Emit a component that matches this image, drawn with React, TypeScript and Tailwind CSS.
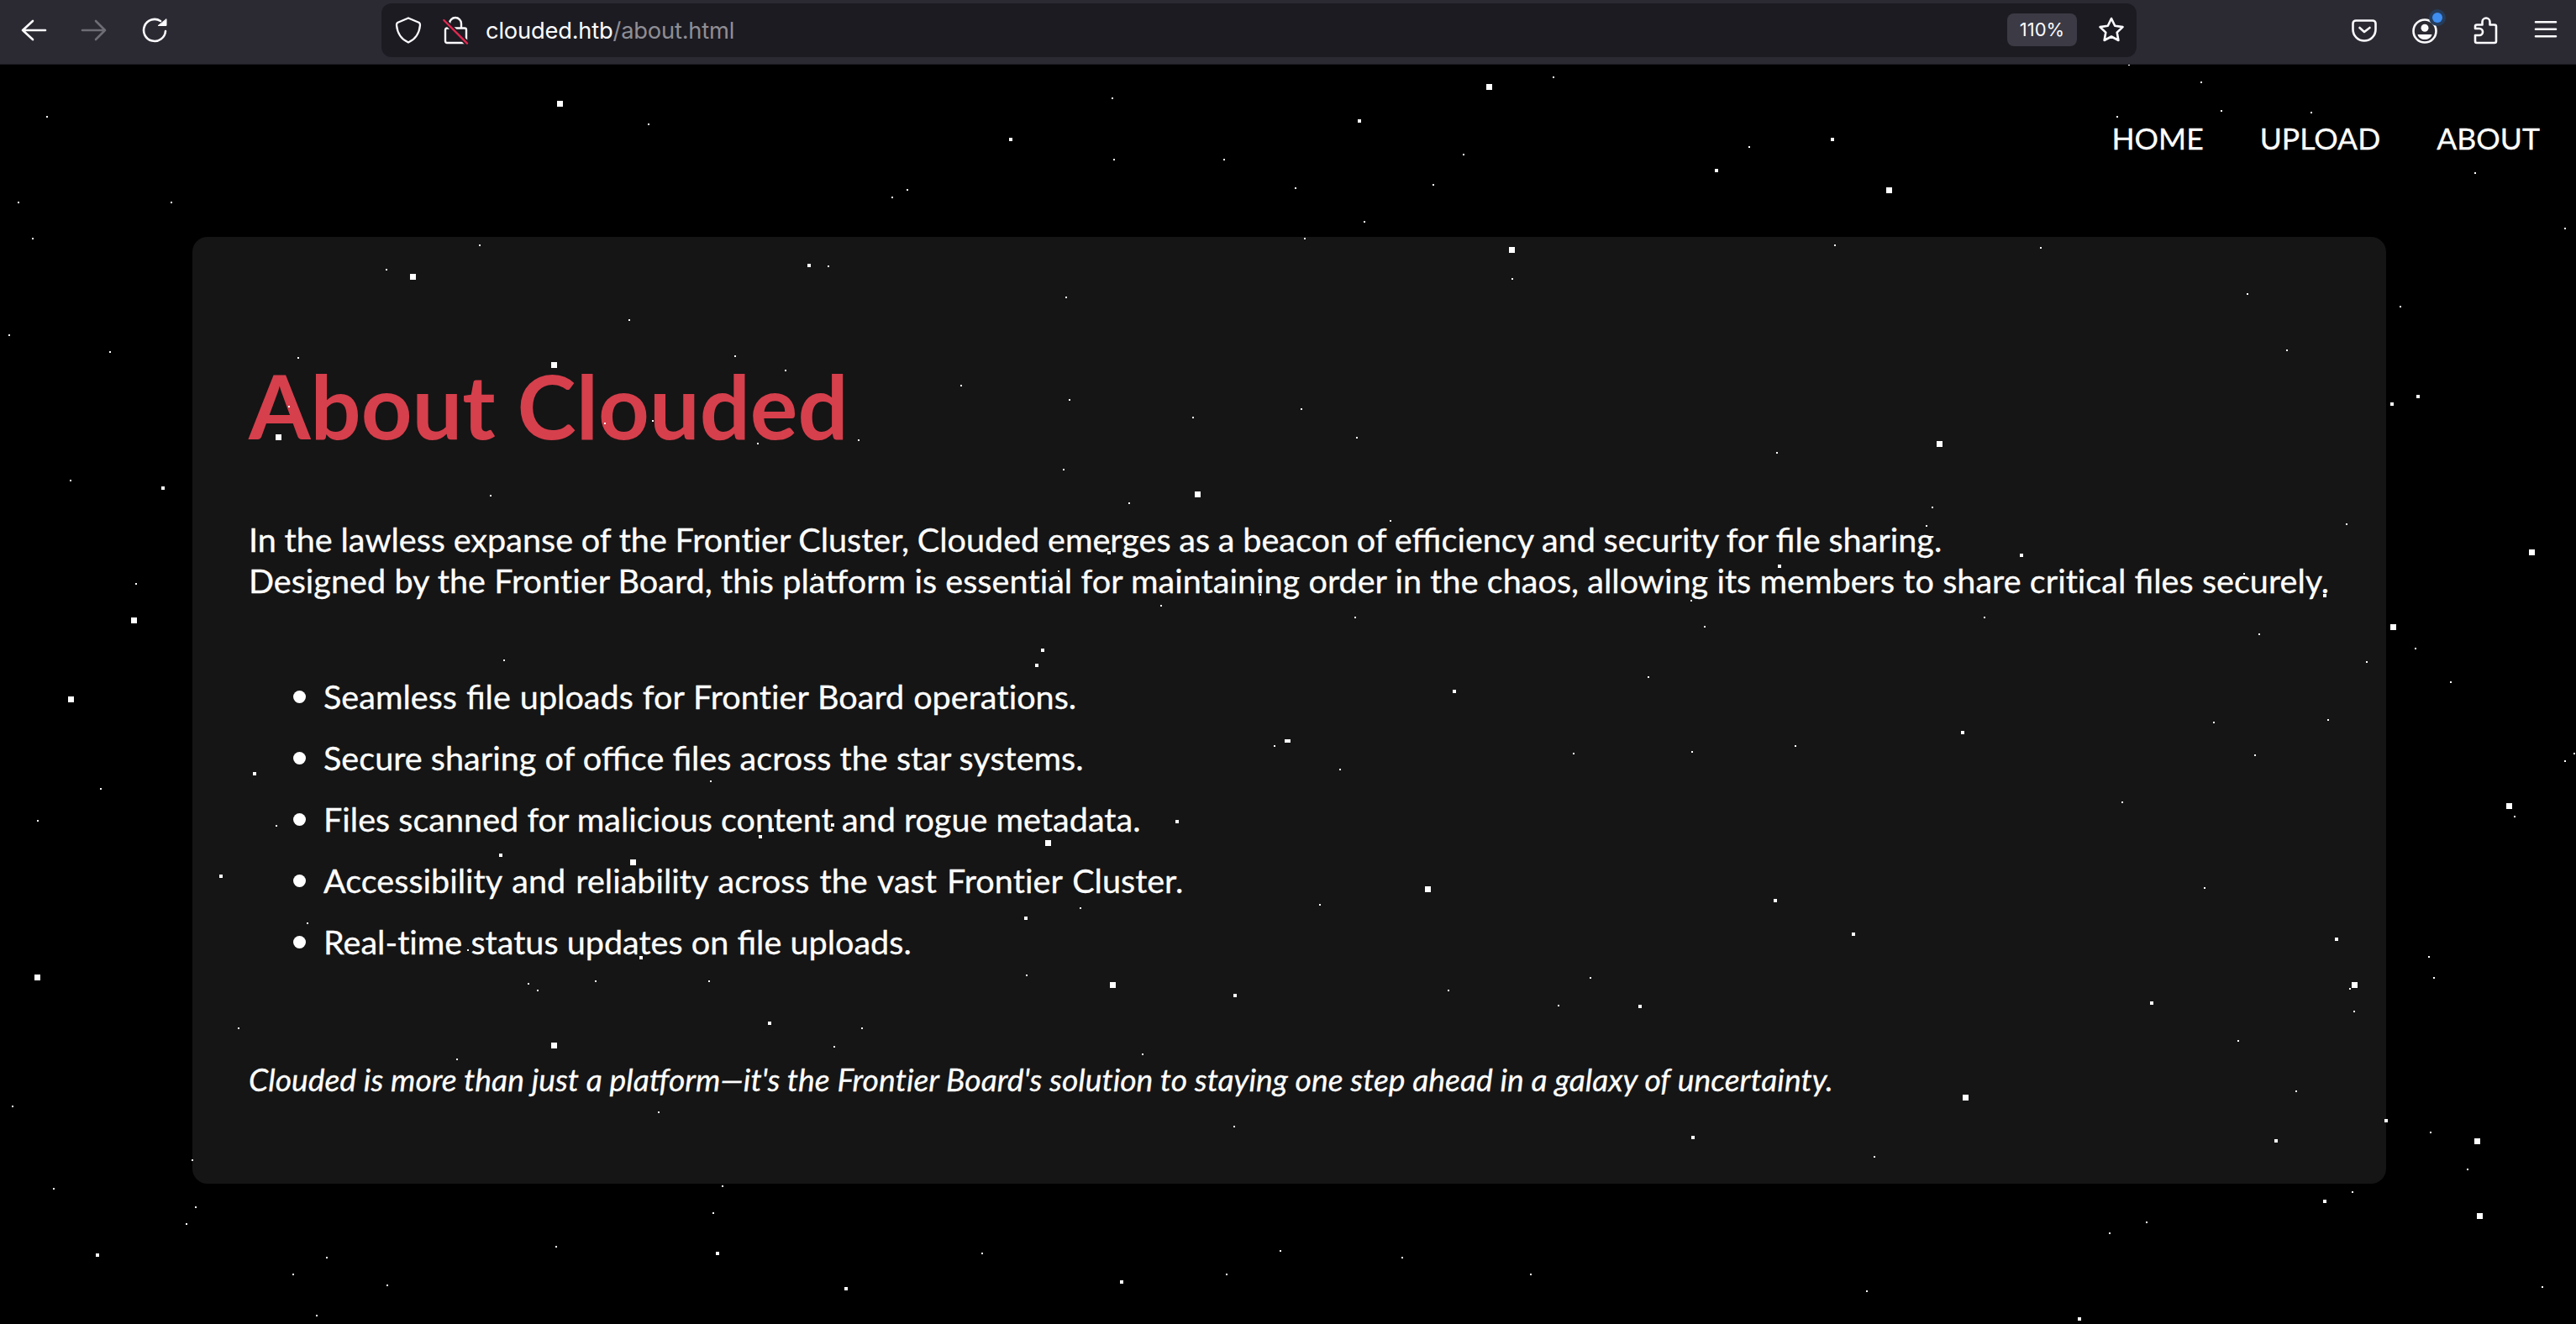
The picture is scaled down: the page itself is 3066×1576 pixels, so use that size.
import React from "react";

type Star = [number, number, number?];

// star positions read off four crops of the page; each crop has its own origin and scale
const tile = (ox: number, oy: number, pts: Star[]) =>
  pts.map(([x, y, s]) => [Math.round(ox + x / 1.0228), Math.round(oy + y / 2.09), s ?? 2] as const);

const stars = [
  ...tile(0, 76, [
    [681, 99, 7], [502, 528, 7], [674, 749, 7], [339, 927, 7], [1457, 1071, 7], [163, 1383, 7],
    [1230, 189, 4], [985, 502, 4], [198, 1056, 4], [1269, 1459, 4], [1262, 1496, 4], [1350, 1217, 4],
    [57, 131], [790, 150], [1354, 86], [1356, 238], [1490, 238], [1105, 313], [1086, 332], [22, 345], [209, 345],
    [40, 435], [584, 451], [1008, 503], [470, 512], [1298, 582], [766, 637], [11, 675], [134, 717], [363, 732],
    [895, 727], [956, 763], [1170, 800], [1302, 837], [1452, 880], [352, 853], [736, 895], [795, 888], [923, 944],
    [1045, 937], [1295, 1010], [86, 1037], [597, 1075], [1375, 1093], [1289, 1263], [166, 1294], [1414, 1348],
    [614, 1484], [1534, 1320], [992, 1270],
  ]),
  ...tile(1533, 76, [
    [244, 57, 7], [731, 314, 7], [272, 462, 7], [793, 945, 7], [1514, 1215, 7], [1345, 1401, 7],
    [87, 143, 4], [663, 189, 4], [522, 265, 4], [1376, 828, 4], [1344, 847, 4], [893, 1222, 4], [598, 1250, 4],
    [1262, 1322, 4], [203, 1561, 4],
    [323, 33], [1024, 3], [1112, 47], [1136, 116], [1246, 122], [1010, 131], [562, 206], [214, 225], [9, 309],
    [177, 302], [93, 393], [1445, 271], [20, 435], [666, 451], [916, 458], [1555, 409], [273, 535], [1168, 573],
    [1354, 605], [1216, 713], [16, 860], [84, 930], [595, 968], [784, 1103], [777, 1150], [125, 1138], [1289, 1145],
    [82, 1378], [507, 1401], [848, 1378], [1182, 1419], [1373, 1455], [1313, 1488], [439, 1526], [1416, 1539],
    [491, 1335], [1164, 1268],
  ]),
  ...tile(0, 826, [
    [86, 13, 7], [45, 705, 7], [1275, 370, 7], [770, 418, 7], [1354, 724, 7], [674, 873, 7],
    [310, 198, 4], [610, 401, 4], [269, 453, 4], [940, 338, 4], [926, 355, 4], [1014, 325, 4], [1249, 559, 4],
    [780, 657, 4], [1504, 750, 4], [937, 819, 4], [119, 1396, 4], [873, 1392, 4], [1030, 1480, 4], [1566, 116, 4],
    [1433, 318, 4], [1365, 1463, 4],
    [1552, 129], [865, 217], [123, 236], [46, 316], [336, 329], [1315, 533], [374, 570], [570, 637], [643, 722],
    [655, 738], [725, 715], [863, 715], [1250, 700], [290, 831], [1049, 831], [1016, 877], [556, 909], [1391, 897],
    [15, 1026], [802, 1041], [1503, 1077], [234, 1160], [65, 1231], [880, 1225], [238, 1277], [868, 1292], [227, 1319],
    [677, 1376], [398, 1403], [1196, 1392], [1559, 1385], [357, 1445], [471, 1472], [1493, 1445], [386, 1547],
  ]),
  ...tile(1533, 826, [
    [170, 484, 7], [824, 1004, 7], [1298, 724, 7], [1486, 279, 7], [1447, 1111, 7], [1450, 1297, 7],
    [1, 116, 4], [821, 96, 4], [593, 514, 4], [688, 598, 4], [1276, 610, 4], [429, 777, 4], [1051, 769, 4],
    [1337, 1062, 4], [493, 1104, 4], [1203, 1112, 4], [1262, 1263, 4], [963, 1555, 4],
    [63, 189], [348, 148], [492, 144], [618, 130], [1127, 72], [1266, 64], [1177, 153], [1016, 270], [1555, 167],
    [1566, 148], [1493, 305], [1116, 483], [39, 524], [368, 707], [195, 738], [329, 776], [1293, 733], [1298, 790],
    [1389, 654], [1395, 707], [1157, 863], [1227, 989], [1391, 1090], [714, 1152], [1436, 1183], [1296, 1240],
    [1045, 1315], [1000, 1342], [139, 1403], [296, 1445], [705, 1486], [1527, 1475],
  ]),
];

function Starfield() {
  return (
    <div className="absolute inset-0 overflow-hidden pointer-events-none">
      {stars.map(([x, y, s], i) => (
        <div
          key={i}
          className="absolute bg-white"
          style={{ left: x - Math.floor(s / 2), top: y - Math.floor(s / 2), width: s, height: s }}
        />
      ))}
    </div>
  );
}

function ToolIcon({ children, className = "text-[#fbfbfe]" }: { children: React.ReactNode; className?: string }) {
  return (
    <svg
      viewBox="0 0 32 32"
      width="32"
      height="32"
      fill="none"
      stroke="currentColor"
      strokeWidth="2.6"
      strokeLinecap="round"
      strokeLinejoin="round"
      className={`shrink-0 overflow-visible ${className}`}
    >
      {children}
    </svg>
  );
}

function Toolbar() {
  return (
    <div className="h-[77px] pb-[5px] bg-[#2b2a33] border-b border-[#1c1b22] flex items-center relative z-10 font-['Inter',sans-serif] text-[#fbfbfe]">
      <div className="w-[454px] shrink-0 flex items-center pl-[24px] gap-[40px]">
        <ToolIcon>
          <path d="M30 16H3M15 5 3 16l12 11" />
        </ToolIcon>
        <ToolIcon className="text-[#6e6d75]">
          <path d="M2 16h27M18 5l11 11-11 11" />
        </ToolIcon>
        <ToolIcon>
          <path d="M23 5A13 13 0 1 0 29 17" />
          <path d="M20.500 10.500H30V3Z" fill="currentColor" stroke="currentColor" strokeWidth="1" />
        </ToolIcon>
      </div>
      <div className="w-[2089px] shrink-0 h-[64px] bg-[#1c1b22] rounded-[12px] flex items-center pl-[16px] pr-[14px]">
        <ToolIcon>
          <path d="M16 1.500 29 7q1 1 1 3C29 20 24 27 16 30.500 8 27 3 20 2 10q0-2 1-3Z" strokeWidth="2.300" />
        </ToolIcon>
        <svg viewBox="0 0 32 32" width="32" height="32" fill="none" stroke="#fbfbfe" strokeWidth="2.400" strokeLinejoin="round" strokeLinecap="round" className="ml-[24px] shrink-0 overflow-visible">
          <path d="M9 13.500V8a7 7 0 0 1 14 0v5.500M6 13.500h21a2 2 0 0 1 2 2V29a2 2 0 0 1-2 2H6a2 2 0 0 1-2-2V15.500a2 2 0 0 1 2-2Z" />
          <path d="M2.300 4 30 31.700" stroke="#1c1b22" strokeWidth="6" strokeLinecap="butt" />
          <path d="M2.300 4 30 31.700" stroke="#e22850" strokeWidth="2.400" />
        </svg>
        <div className="ml-[20px] pt-[2px] text-[27.3px] leading-none tracking-[-0.2px]">
          clouded.htb<span className="text-[#8f8e95]">/about.html</span>
        </div>
        <div className="ml-auto h-[39px] w-[83px] bg-[#3b3a45] rounded-[8px] flex items-center justify-center text-[22px]">110%</div>
        <div className="ml-[25px]">
          <ToolIcon>
            <path d="m16 2 4.200 8.800 9.300 1.300-6.800 6.500 1.700 9.400L16 23.500 7.600 28l1.700-9.400-6.800-6.500 9.300-1.300Z" />
          </ToolIcon>
        </div>
      </div>
      <div className="flex-1 flex items-center pl-[255px] gap-[40px]">
        <ToolIcon>
          <path d="M6 4.500h20a3.500 3.500 0 0 1 3.500 3.500v7a13.500 13.500 0 0 1-27 0V8A3.500 3.500 0 0 1 6 4.500Z" />
          <path d="m10.500 13 5.500 5 6.500-5" />
        </ToolIcon>
        <div className="relative w-[32px] h-[32px]">
          <ToolIcon>
            <circle cx="16" cy="17" r="13.500" />
            <circle cx="16" cy="13.300" r="4.500" fill="currentColor" stroke="none" />
            <path d="M7.500 21h17c-1 4-4.500 6-8.500 6s-7.500-2-8.500-6Z" fill="currentColor" stroke="none" />
          </ToolIcon>
          <div className="absolute -top-[5px] left-[25px] w-[12px] h-[12px] rounded-full bg-[#3f8ef2] shadow-[0_0_0_4px_#253d5c]" />
        </div>
        <ToolIcon>
          <path d="M6 31h21a2 2 0 0 0 2-2V11.500a2 2 0 0 0-2-2h-5.500V6a4.500 4.500 0 0 0-9 0v3.500H6a2 2 0 0 0-2 2V14h5a4 4 0 0 1 0 8H4v7a2 2 0 0 0 2 2Z" />
        </ToolIcon>
        <ToolIcon>
          <path d="M4 6.300h24M4 14.700h24M4 23.300h24" />
        </ToolIcon>
      </div>
    </div>
  );
}

// this Lato build joins "ti" into a ligature the reference doesn't have, while "fi" stays joined
function Text({ children }: { children: string }) {
  return (
    <>
      {children.split(/(ti)/).map((part, i) =>
        part === "ti" ? (
          <span key={i} className="[font-variant-ligatures:none]">
            {part}
          </span>
        ) : (
          part
        ),
      )}
    </>
  );
}

// word spacing evens out the small per-line width differences against the reference's Lato
const features: [string, string][] = [
  ["Seamless file uploads for Frontier Board operations.", "[word-spacing:0.85px]"],
  ["Secure sharing of office files across the star systems.", ""],
  ["Files scanned for malicious content and rogue metadata.", ""],
  ["Accessibility and reliability across the vast Frontier Cluster.", "[word-spacing:2px]"],
  ["Real-time status updates on file uploads.", ""],
];

export default function App() {
  return (
    <div className="relative w-[3066px] h-[1576px] bg-black overflow-hidden font-['Lato',sans-serif] text-white">
      <Toolbar />
      <nav className="flex justify-end gap-[67px] pr-[43px] pt-[66px] h-[205px] text-[35.6px] leading-[44px] [-webkit-text-stroke:0.3px_white]">
        <a>HOME</a>
        <a>UPLOAD</a>
        <a>ABOUT</a>
      </nav>
      <main className="ml-[229px] w-[2611px] h-[1127px] bg-[#151515] rounded-[18px] px-[67px] pt-[66px]">
        <h1 className="text-[106px] leading-[127px] font-bold text-[#d63f4c] mt-[71px]">About Clouded</h1>
        <div className="[-webkit-text-stroke:0.3px_white]">
          <p className="text-[39.6px] leading-[49px] mt-[71px]">
            <span className="[word-spacing:-0.4px]">
              <Text>In the lawless expanse of the Frontier Cluster, Clouded emerges as a beacon of efficiency and security for file sharing.</Text>
            </span>
            <br />
            <span className="[word-spacing:0.17px]">
              <Text>Designed by the Frontier Board, this platform is essential for maintaining order in the chaos, allowing its members to share critical files securely.</Text>
            </span>
          </p>
          <ul className="pl-[53px] mt-[89px] text-[39.6px] leading-[49px] flex flex-col gap-[24px]">
            {features.map(([f, spacing]) => (
              <li key={f} className="flex items-center">
                <span className="w-[15px] h-[15px] mt-[2px] rounded-full bg-white mr-[21px] shrink-0" />
                <span className={spacing}>
                  <Text>{f}</Text>
                </span>
              </li>
            ))}
          </ul>
          <p className="italic text-[37.3px] leading-[46px] mt-[117px]">
            <Text>Clouded is more than just a platform—it's the Frontier Board's solution to staying one step ahead in a galaxy of uncertainty.</Text>
          </p>
        </div>
      </main>
      <Starfield />
    </div>
  );
}
